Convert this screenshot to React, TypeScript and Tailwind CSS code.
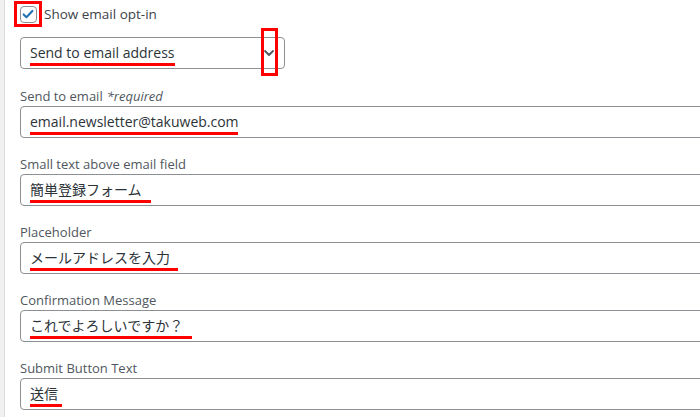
import React from "react";

const FONT = { fontFamily: '"Open Sans", "Noto Sans", "Noto Sans CJK JP", sans-serif' };

const FIELDS = [
  { label: "Send to email", req: true, value: "email.newsletter@takuweb.com", line: "w-[208px]" },
  { label: "Small text above email field", value: "簡単登録フォーム", line: "w-[121px]" },
  { label: "Placeholder", value: "メールアドレスを入力", line: "w-[148px]" },
  { label: "Confirmation Message", value: "これでよろしいですか？", line: "w-[162px]" },
  { label: "Submit Button Text", value: "送信", line: "w-[32px]" },
];

function Field({ label, req, value, line }: { label: string; req?: boolean; value: string; line: string }) {
  return (
    <div className="flex flex-col shrink-0">
      <div className="h-[20px] text-[13px] leading-[20px] text-[#50575e]">
        {label}
        {req && <em className="ml-1 italic">*required</em>}
      </div>
      <div className="h-[32px] w-[720px] rounded-[4px] border border-[#8c8f94] bg-white pl-[9px] flex items-center">
        <div className="relative text-[14px] leading-[20px] text-[#2c3338]">
          {value}
          <div className={`absolute left-0 top-[20px] h-[3px] bg-[#ff0000] ${line}`} />
        </div>
      </div>
    </div>
  );
}

export default function App() {
  return (
    <div className="h-[417px] w-[700px] overflow-hidden bg-white flex" style={FONT}>
      {/* left admin gutter */}
      <div className="w-[5px] shrink-0 bg-[#f0f0f1] border-r border-[#dcdcde]" />
      <div className="flex flex-col pl-[9px] pt-[1px]">
        {/* checkbox row */}
        <div className="flex items-center h-[26px] shrink-0">
          <div className="relative w-[28px] h-[26px] flex items-center justify-center">
            <div className="absolute inset-0 border-[3px] border-[#ff0000]" />
            <div className="w-[17px] h-[17px] rounded-[4px] border border-[#8c8f94] bg-white flex items-center justify-center">
              <svg width="14" height="14" viewBox="0 0 16 16" fill="none">
                <path d="M3 8.5l3.2 3.2L13 4.5" stroke="#2271b1" strokeWidth="2.4" strokeLinecap="round" strokeLinejoin="round" />
              </svg>
            </div>
          </div>
          <span className="ml-[2px] text-[13.5px] text-[#3c434a]">Show email opt-in</span>
        </div>

        {/* select */}
        <div className="mt-[10px] ml-[6px] shrink-0 relative w-[265px] h-[32px] rounded-[4px] border border-[#8c8f94] bg-white flex items-center justify-between pl-[9px] pr-[9px]">
          <div className="relative text-[14px] leading-[20px] text-[#2c3338]">
            Send to email address
            <div className="absolute left-0 top-[20px] h-[3px] w-[145px] bg-[#ff0000]" />
          </div>
          <svg width="12" height="12" viewBox="0 0 12 12" fill="none">
            <path d="M2 4l4 4 4-4" stroke="#50575e" strokeWidth="1.8" strokeLinecap="round" strokeLinejoin="round" />
          </svg>
          <div className="absolute right-[6px] top-[-10px] w-[17px] h-[48px] border-[3px] border-[#ff0000]" />
        </div>

        <div className="ml-[6px] mt-[17px] flex flex-col gap-[16px]">
          {FIELDS.map((f) => (
            <Field key={f.label} {...f} />
          ))}
        </div>
      </div>
    </div>
  );
}
